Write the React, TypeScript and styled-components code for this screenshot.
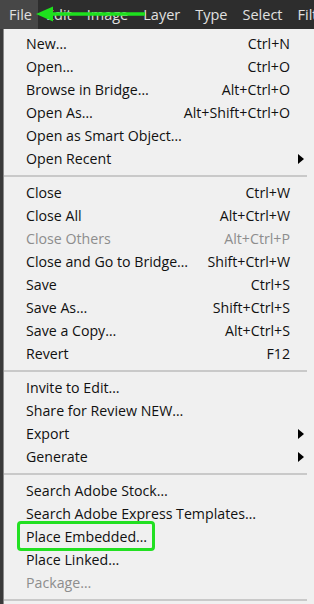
import styled, { createGlobalStyle } from 'styled-components';

const GlobalStyle = createGlobalStyle`
  html, body {
    margin: 0;
    padding: 0;
    background: #3a3a3a;
    overflow: hidden;
  }
  body {
    font-family: 'Open Sans', 'Noto Sans', sans-serif;
  }
`;

const Page = styled.div`
  position: relative;
  width: 314px;
  height: 604px;
  overflow: hidden;
  background: #3a3a3a;
`;

const MenuBar = styled.div`
  display: flex;
  height: 29px;
  background: #2d2d2d;
  align-items: stretch;
`;

const BarItem = styled.div<{ $active?: boolean }>`
  display: flex;
  align-items: center;
  padding: 0 6px 0 9px;
  color: #e0e0e0;
  font-size: 14.5px;
  white-space: nowrap;
  background: ${(p) => (p.$active ? '#474747' : 'transparent')};
  & + & {
    padding: 0 7px 0 8px;
  }
`;

const Menu = styled.div`
  margin-left: 3px;
  border-left: 1px solid #8a8a8a;
  background: #f0f0f0;
  padding-top: 3px;
  display: flex;
  flex-direction: column;
`;

const Row = styled.div<{ $disabled?: boolean }>`
  display: flex;
  align-items: center;
  height: 23px;
  padding: 0 24px 0 22px;
  font-size: 14.2px;
  color: ${(p) => (p.$disabled ? '#8d8d8d' : '#111')};
  white-space: nowrap;
`;

const Label = styled.span`
  flex: 1;
`;

const Shortcut = styled.span`
  text-align: right;
`;

const SubArrow = styled.span`
  width: 0;
  height: 0;
  border-top: 5px solid transparent;
  border-bottom: 5px solid transparent;
  border-left: 6px solid #000;
  margin-right: -14px;
`;

const Separator = styled.div`
  height: 11px;
  display: flex;
  align-items: center;
  padding: 0 7px 0 0;
  &::after {
    content: '';
    flex: 1;
    height: 2px;
    background: #c9c9c9;
  }
`;

const Highlight = styled.div`
  position: absolute;
  left: 17px;
  top: 521px;
  width: 132px;
  height: 24px;
  border: 3px solid #22e022;
  border-radius: 4px;
`;

const Arrow = styled.svg`
  position: absolute;
  left: 35px;
  top: 5px;
`;

type Item = { label: string; shortcut?: string; disabled?: boolean; sub?: boolean } | 'sep';

const items: Item[] = [
  { label: 'New…', shortcut: 'Ctrl+N' },
  { label: 'Open…', shortcut: 'Ctrl+O' },
  { label: 'Browse in Bridge…', shortcut: 'Alt+Ctrl+O' },
  { label: 'Open As…', shortcut: 'Alt+Shift+Ctrl+O' },
  { label: 'Open as Smart Object…' },
  { label: 'Open Recent', sub: true },
  'sep',
  { label: 'Close', shortcut: 'Ctrl+W' },
  { label: 'Close All', shortcut: 'Alt+Ctrl+W' },
  { label: 'Close Others', shortcut: 'Alt+Ctrl+P', disabled: true },
  { label: 'Close and Go to Bridge…', shortcut: 'Shift+Ctrl+W' },
  { label: 'Save', shortcut: 'Ctrl+S' },
  { label: 'Save As…', shortcut: 'Shift+Ctrl+S' },
  { label: 'Save a Copy…', shortcut: 'Alt+Ctrl+S' },
  { label: 'Revert', shortcut: 'F12' },
  'sep',
  { label: 'Invite to Edit…' },
  { label: 'Share for Review NEW…' },
  { label: 'Export', sub: true },
  { label: 'Generate', sub: true },
  'sep',
  { label: 'Search Adobe Stock…' },
  { label: 'Search Adobe Express Templates…' },
  { label: 'Place Embedded…' },
  { label: 'Place Linked…' },
  { label: 'Package…', disabled: true },
  'sep',
];

const bar = ['File', 'Edit', 'Image', 'Layer', 'Type', 'Select', 'Filter'];

function App() {
  return (
    <Page>
      <GlobalStyle />
      <MenuBar>
        {bar.map((b, i) => (
          <BarItem key={b} $active={i === 0}>
            {b}
          </BarItem>
        ))}
      </MenuBar>
      <Menu>
        {items.map((item, index) =>
          item === 'sep' ? (
            <Separator key={index} />
          ) : (
            <Row key={index} $disabled={item.disabled}>
              <Label>{item.label}</Label>
              {item.shortcut && <Shortcut>{item.shortcut}</Shortcut>}
              {item.sub && <SubArrow />}
            </Row>
          )
        )}
      </Menu>
      <Highlight />
      <Arrow width='114' height='18' viewBox='0 0 114 18'>
        <path d='M1 9 L18 1.5 L18 16.5 Z' fill='#1ee01e' />
        <line x1='16' y1='9' x2='110' y2='9' stroke='#1ee01e' strokeWidth='3.5' />
      </Arrow>
    </Page>
  );
}

export default App;
